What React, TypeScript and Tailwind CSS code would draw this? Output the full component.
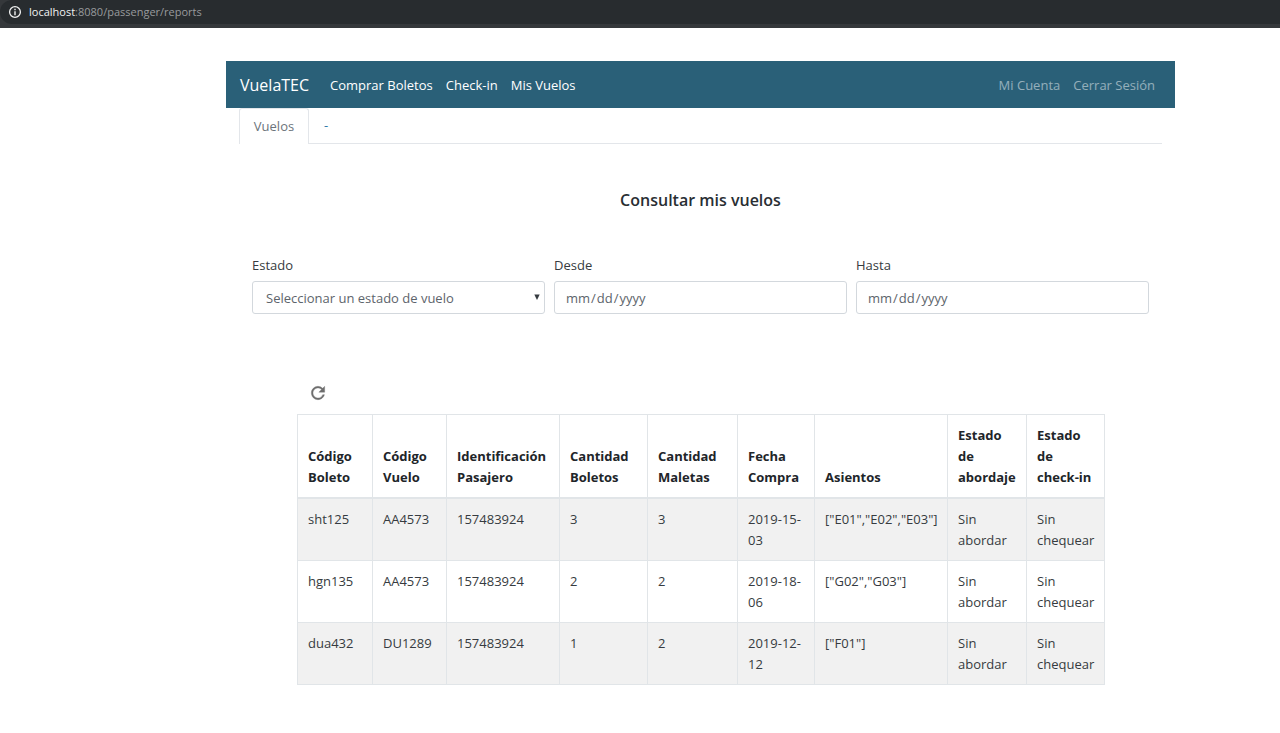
import { useState } from "react";

const COLUMNS = [
  { label: "Código Boleto", width: "w-[75px]" },
  { label: "Código Vuelo", width: "w-[74px]" },
  { label: "Identificación Pasajero", width: "w-[113px]" },
  { label: "Cantidad Boletos", width: "w-[88px]" },
  { label: "Cantidad Maletas", width: "w-[90px]" },
  { label: "Fecha Compra", width: "w-[77px]" },
  { label: "Asientos", width: "w-[133px]" },
  { label: "Estado de abordaje", width: "w-[79px]" },
  { label: "Estado de check-in", width: "w-[78px]" },
];

const ROWS = [
  ["sht125", "AA4573", "157483924", "3", "3", "2019-15-03", '["E01","E02","E03"]', "Sin abordar", "Sin chequear"],
  ["hgn135", "AA4573", "157483924", "2", "2", "2019-18-06", '["G02","G03"]', "Sin abordar", "Sin chequear"],
  ["dua432", "DU1289", "157483924", "1", "2", "2019-12-12", '["F01"]', "Sin abordar", "Sin chequear"],
];

function InfoIcon() {
  return (
    <svg viewBox="0 0 14 14" aria-hidden="true" className="h-[14px] w-[14px]">
      <circle cx="7" cy="7" r="5.4" fill="none" stroke="currentColor" strokeWidth="1.3" />
      <path d="M6.3 6.3H7.7V10.2H6.3ZM6.3 3.8H7.7V5.2H6.3Z" fill="currentColor" />
    </svg>
  );
}

function RefreshIcon() {
  return (
    <svg viewBox="0 0 24 24" aria-hidden="true" className="h-5 w-5">
      <path
        d="M17.65 6.35A7.958 7.958 0 0 0 12 4c-4.42 0-7.99 3.58-7.99 8s3.57 8 7.99 8c3.73 0 6.84-2.55 7.73-6h-2.08A5.99 5.99 0 0 1 12 18c-3.31 0-6-2.69-6-6s2.69-6 6-6c1.66 0 3.14.69 4.22 1.78L13 11h7V4l-2.35 2.35z"
        fill="currentColor"
        stroke="currentColor"
        strokeWidth="0.4"
      />
    </svg>
  );
}

function AddressBar() {
  return (
    <header className="h-7 bg-[#35383b] text-[11px] text-[#989b9d]">
      <div className="flex h-6 items-center gap-[7px] rounded-l-full bg-[#282c2f] pl-2">
        <button type="button" aria-label="Información del sitio" className="text-[#f1f2f2]">
          <InfoIcon />
        </button>
        <span className="leading-4">
          <span className="font-medium text-[#f1f2f2]">localhost</span>:8080/passenger/reports
        </span>
      </div>
    </header>
  );
}

function Navbar() {
  return (
    <nav className="flex h-[47px] items-center bg-[#2a6078] pl-[14px] pr-5 pt-px text-white">
      <a href="#inicio" className="mr-[21px] text-[16px]">VuelaTEC</a>
      <div className="flex gap-[13px]">
        <a href="#comprar">Comprar Boletos</a>
        <a href="#checkin">Check-in</a>
        <a href="#vuelos">Mis Vuelos</a>
      </div>
      <div className="ml-auto flex gap-[13px] text-white/50">
        <a href="#cuenta">Mi Cuenta</a>
        <a href="#salir">Cerrar Sesión</a>
      </div>
    </nav>
  );
}

function DateField({ id, label }: { id: string; label: string }) {
  return (
    <div className="flex flex-1 flex-col gap-[5px]">
      <label htmlFor={id}>{label}</label>
      <input
        id={id}
        type="date"
        className="h-[33px] w-full rounded-[3px] border border-[#d3d8dd] bg-white px-[10px] pt-[2px] text-[13px] text-[#5d646b] [&::-webkit-calendar-picker-indicator]:hidden"
      />
    </div>
  );
}

export default function App() {
  const [status, setStatus] = useState("");

  return (
    <div className="min-h-screen bg-white font-['Open_Sans','Noto_Sans',sans-serif] text-[13px] leading-[21px] text-[#363b40]">
      <AddressBar />
      <div className="pl-[226px] pr-[105px] pt-[33px]">
        <Navbar />
        <main className="px-[13px]">
          <div role="tablist" className="flex h-9 border-b border-[#e3e6ea]">
            <button
              type="button"
              role="tab"
              aria-selected="true"
              className="-mb-px w-[70px] rounded-t-[3px] border border-b-0 border-[#e3e6ea] bg-white text-[#6c747b]"
            >
              Vuelos
            </button>
            <button type="button" role="tab" aria-selected="false" className="px-[15px] text-[#2f7ca8]">
              -
            </button>
          </div>

          <h1 className="mt-[46px] text-center text-[16px] font-semibold text-[#292e33]">Consultar mis vuelos</h1>

          <form className="mt-[44px] flex gap-[9px] px-[13px]">
            <div className="flex flex-1 flex-col gap-[5px]">
              <label htmlFor="estado">Estado</label>
              <div className="relative">
                <select
                  id="estado"
                  value={status}
                  onChange={(event) => setStatus(event.target.value)}
                  className="h-[33px] w-full appearance-none rounded-[3px] border border-[#d3d8dd] bg-white px-[13px] pt-[2px] text-[13px] text-[#5d646b]"
                >
                  <option value="">Seleccionar un estado de vuelo</option>
                </select>
                <svg
                  viewBox="0 0 6 6"
                  aria-hidden="true"
                  className="pointer-events-none absolute right-[5px] top-[13px] h-[6px] w-[6px] fill-[#363b40]"
                >
                  <path d="M0.3 0.5H5.7L3 6Z" />
                </svg>
              </div>
            </div>
            <DateField id="desde" label="Desde" />
            <DateField id="hasta" label="Hasta" />
          </form>

          <section className="px-[58px] pb-12 pt-[69px]">
            <button type="button" aria-label="Actualizar" className="mb-[11px] ml-[11px] block text-[#6e6e6e]">
              <RefreshIcon />
            </button>
            <table className="w-full table-fixed border-collapse border border-[#e1e5e8]">
              <colgroup>
                {COLUMNS.map((column) => (
                  <col key={column.label} className={column.width} />
                ))}
              </colgroup>
              <thead>
                <tr>
                  {COLUMNS.map((column) => (
                    <th
                      key={column.label}
                      scope="col"
                      className="border border-b-2 border-[#e1e5e8] px-[10px] pb-[9px] pt-[10px] text-left align-bottom font-bold text-[#212529]"
                    >
                      {column.label}
                    </th>
                  ))}
                </tr>
              </thead>
              <tbody>
                {ROWS.map((row) => (
                  <tr key={row[0]} className="odd:bg-[#f1f1f1]">
                    {row.map((cell, index) => (
                      <td key={index} className="border border-[#e1e5e8] px-[10px] pb-[9px] pt-[10px] align-top">
                        {cell}
                      </td>
                    ))}
                  </tr>
                ))}
              </tbody>
            </table>
          </section>
        </main>
      </div>
    </div>
  );
}
